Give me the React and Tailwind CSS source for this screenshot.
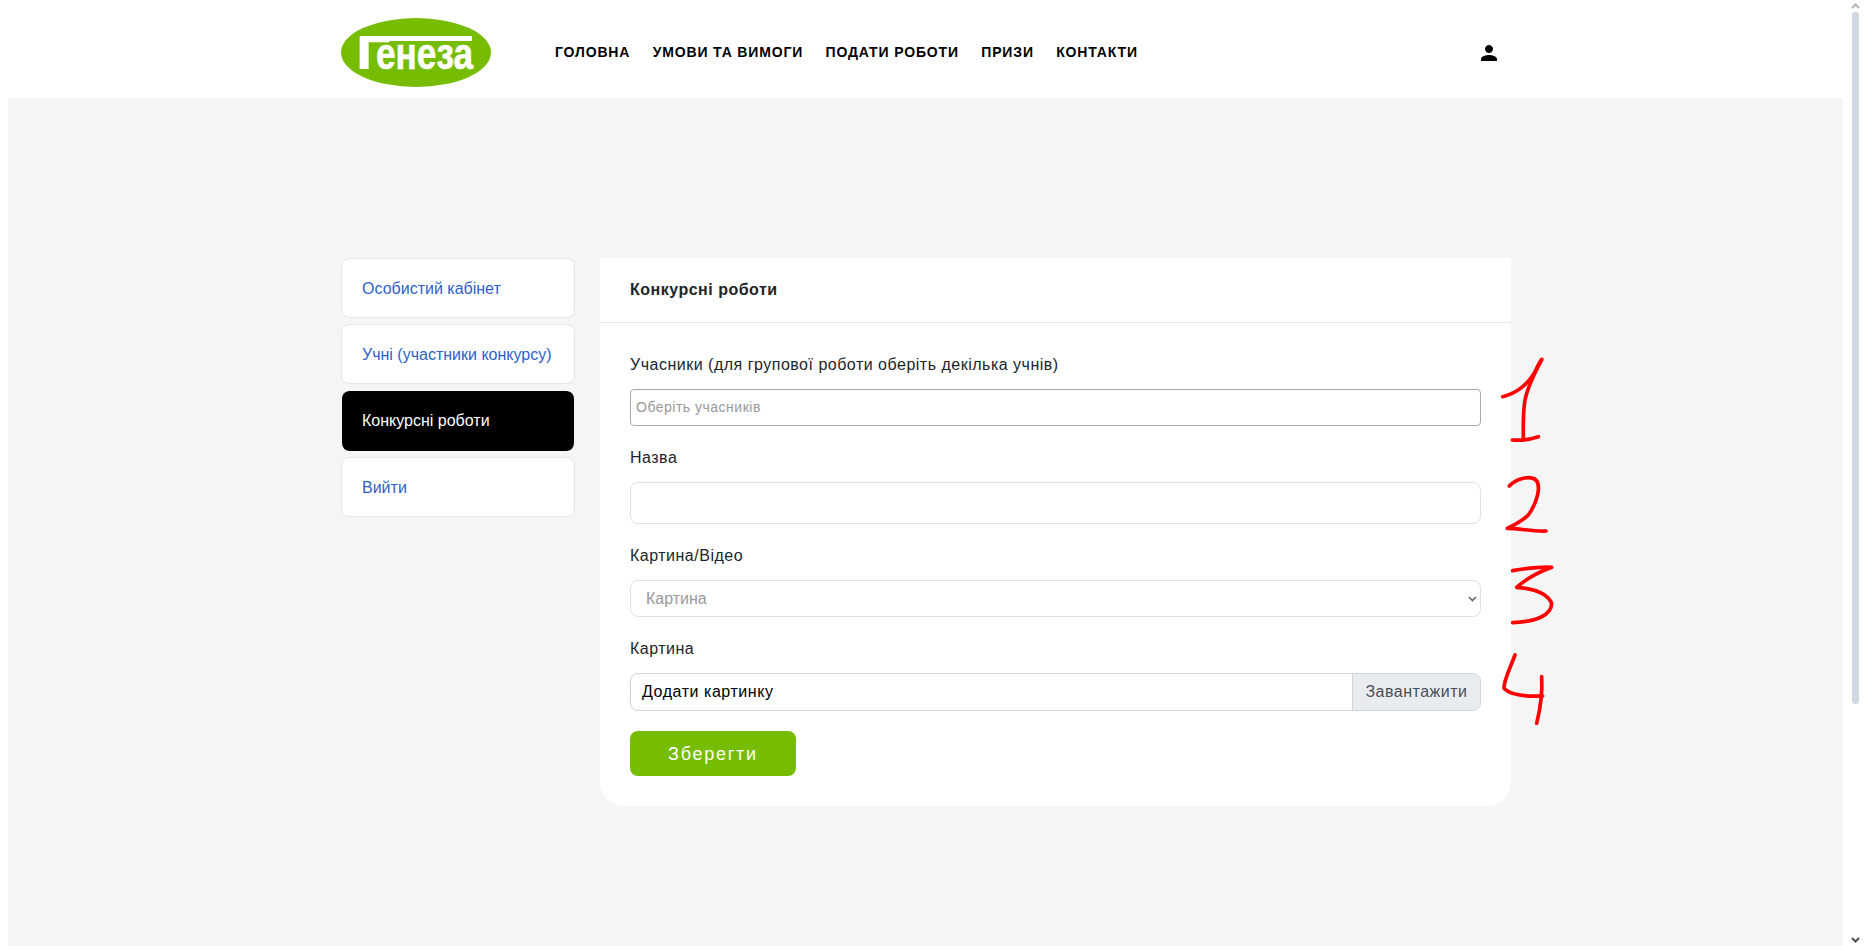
const font = { fontFamily: '"Liberation Sans", Arial, sans-serif' };

function Logo() {
  return (
    <svg width="150" height="69" viewBox="0 0 150 69" className="block shrink-0">
      <ellipse cx="75" cy="34.5" rx="75" ry="34.5" fill="#76bc00" />
      <text
        transform="translate(14.5 51) scale(1.35 1)"
        fontFamily="Liberation Sans"
        fontWeight="700"
        fontSize="46"
        fill="#fff"
      >
        Г
      </text>
      <rect x="19" y="18" width="112" height="5" fill="#fff" />
      <text
        x="35"
        y="51"
        fontFamily="Liberation Sans"
        fontWeight="700"
        fontSize="45"
        fill="#fff"
        stroke="#fff"
        strokeWidth="0.6"
        textLength="97"
        lengthAdjust="spacingAndGlyphs"
      >
        енеза
      </text>
    </svg>
  );
}

function Scribbles() {
  return (
    <svg
      width="260"
      height="400"
      viewBox="0 0 780 1200"
      fill="none"
      stroke="#ff0000"
      strokeWidth="11"
      strokeLinecap="round"
      strokeLinejoin="round"
      className="absolute left-[1320px] top-[340px] pointer-events-none"
    >
      <path d="M548,170 C590,160 630,130 650,85 C658,68 668,52 665,60 C650,90 625,130 615,180 C608,220 610,270 610,300" />
      <path d="M577,300 C600,302 630,298 655,290" />
      <path d="M568,438 C590,415 630,405 648,420 C665,440 650,490 625,525 C605,545 580,555 562,565 C600,565 640,575 678,573" />
      <path d="M578,692 C620,685 660,680 695,682 C660,695 620,715 590,742 C630,745 680,755 695,790 C695,825 650,845 578,848" />
      <path d="M585,945 C570,985 550,1025 552,1045 C570,1065 620,1070 668,1068" />
      <path d="M665,1010 C668,1060 660,1110 650,1150" />
    </svg>
  );
}

function Label({ children }) {
  return <div className="h-6 leading-6 mb-3 text-base tracking-[0.5px] text-[#212529]">{children}</div>;
}

function SideItem({ children, active }) {
  return (
    <a
      className={
        active
          ? "h-[60px] flex items-center pl-[20px] rounded-lg bg-black bg-clip-padding text-white border-x border-transparent text-base"
          : "h-[60px] flex items-center pl-[20px] pt-[1px] rounded-lg bg-white text-[#2f5fc8] border border-[#e6e6e6] text-base"
      }
    >
      {children}
    </a>
  );
}

export default function App() {
  const nav = ["ГОЛОВНА", "УМОВИ ТА ВИМОГИ", "ПОДАТИ РОБОТИ", "ПРИЗИ", "КОНТАКТИ"];
  return (
    <div style={font} className="relative h-screen overflow-hidden bg-white flex">
      <div className="w-2 shrink-0" />
      <div className="w-[1835px] shrink-0 flex flex-col">
        <header className="h-[98px] shrink-0 flex items-center pl-[333px] pt-[7px]">
          <Logo />
          <nav className="ml-[64px] -mt-[1px] flex gap-[22.4px] text-sm font-bold tracking-[0.85px] text-black">
            {nav.map((n) => (
              <a key={n}>{n}</a>
            ))}
          </nav>
          <svg width="24" height="24" viewBox="0 0 24 24" className="ml-[339px] shrink-0" fill="#000">
            <path d="M12 12c2.21 0 4-1.79 4-4s-1.79-4-4-4-4 1.79-4 4 1.79 4 4 4zm0 2c-2.67 0-8 1.34-8 4v2h16v-2c0-2.66-5.33-4-8-4z" />
          </svg>
        </header>
        <main className="flex-1 bg-[#f5f5f5] pt-[160px] pl-[333px] flex items-start gap-[25px]">
          <aside className="w-[234px] shrink-0 flex flex-col gap-[6.4px]">
            <SideItem>Особистий кабінет</SideItem>
            <SideItem>Учні (участники конкурсу)</SideItem>
            <SideItem active>Конкурсні роботи</SideItem>
            <SideItem>Вийти</SideItem>
          </aside>
          <section className="w-[911px] shrink-0 bg-white rounded-b-3xl">
            <div className="h-[65px] border-b border-[#e5e7eb] flex items-center px-[30px] font-bold text-base tracking-[0.5px] text-[#212529]">
              Конкурсні роботи
            </div>
            <div className="px-[30px] pt-[30px] pb-[30px]">
              <Label>Учасники (для групової роботи оберіть декілька учнів)</Label>
              <input
                placeholder="Оберіть учасників"
                className="block w-full h-[37px] border border-[#aaaaaa] rounded px-[5px] pb-[2px] text-sm tracking-[0.5px] placeholder:text-[#999999] mb-5"
              />
              <Label>Назва</Label>
              <input className="block w-full h-[42px] border border-[#dee2e6] rounded-lg mb-5" />
              <Label>Картина/Відео</Label>
              <div className="relative mb-5">
                <select className="block w-full h-[37px] appearance-none border border-[#dee2e6] rounded-lg pl-[15px] text-base text-[#999999] bg-white">
                  <option>Картина</option>
                </select>
                <svg
                  width="9"
                  height="6"
                  viewBox="0 0 9 6"
                  fill="none"
                  stroke="#666666"
                  strokeWidth="1.6"
                  className="absolute right-[4px] top-[16px] pointer-events-none"
                >
                  <path d="M1 1l3.5 3.5L8 1" />
                </svg>
              </div>
              <Label>Картина</Label>
              <div className="flex h-[38px] border border-[#ced4da] rounded-lg overflow-hidden mb-5">
                <div className="flex-1 flex items-center pl-[11px] text-base tracking-[0.55px] text-black">Додати картинку</div>
                <div className="w-[128px] flex items-center justify-center bg-[#e9ecef] border-l border-[#ced4da] text-base tracking-[0.5px] text-[#495057]">
                  Завантажити
                </div>
              </div>
              <button className="block w-[166px] h-[45px] rounded-lg bg-[#76bc00] text-white text-lg tracking-[1.75px]">
                Зберегти
              </button>
            </div>
          </section>
        </main>
      </div>
      <div className="flex-1 flex flex-col items-center pt-[3px] pb-[3px] pl-[1px]">
        <svg width="9" height="6" viewBox="0 0 9 6" fill="none" stroke="#b5b5b5" strokeWidth="2">
          <path d="M1 5l3.5-3.5L8 5" />
        </svg>
        <div className="w-[7px] h-[692px] mt-[3px] bg-[#cfd9e3] rounded-[3px]" />
        <div className="flex-1" />
        <svg width="9" height="6" viewBox="0 0 9 6" fill="none" stroke="#505050" strokeWidth="2">
          <path d="M1 1l3.5 3.5L8 1" />
        </svg>
      </div>
      <Scribbles />
    </div>
  );
}
